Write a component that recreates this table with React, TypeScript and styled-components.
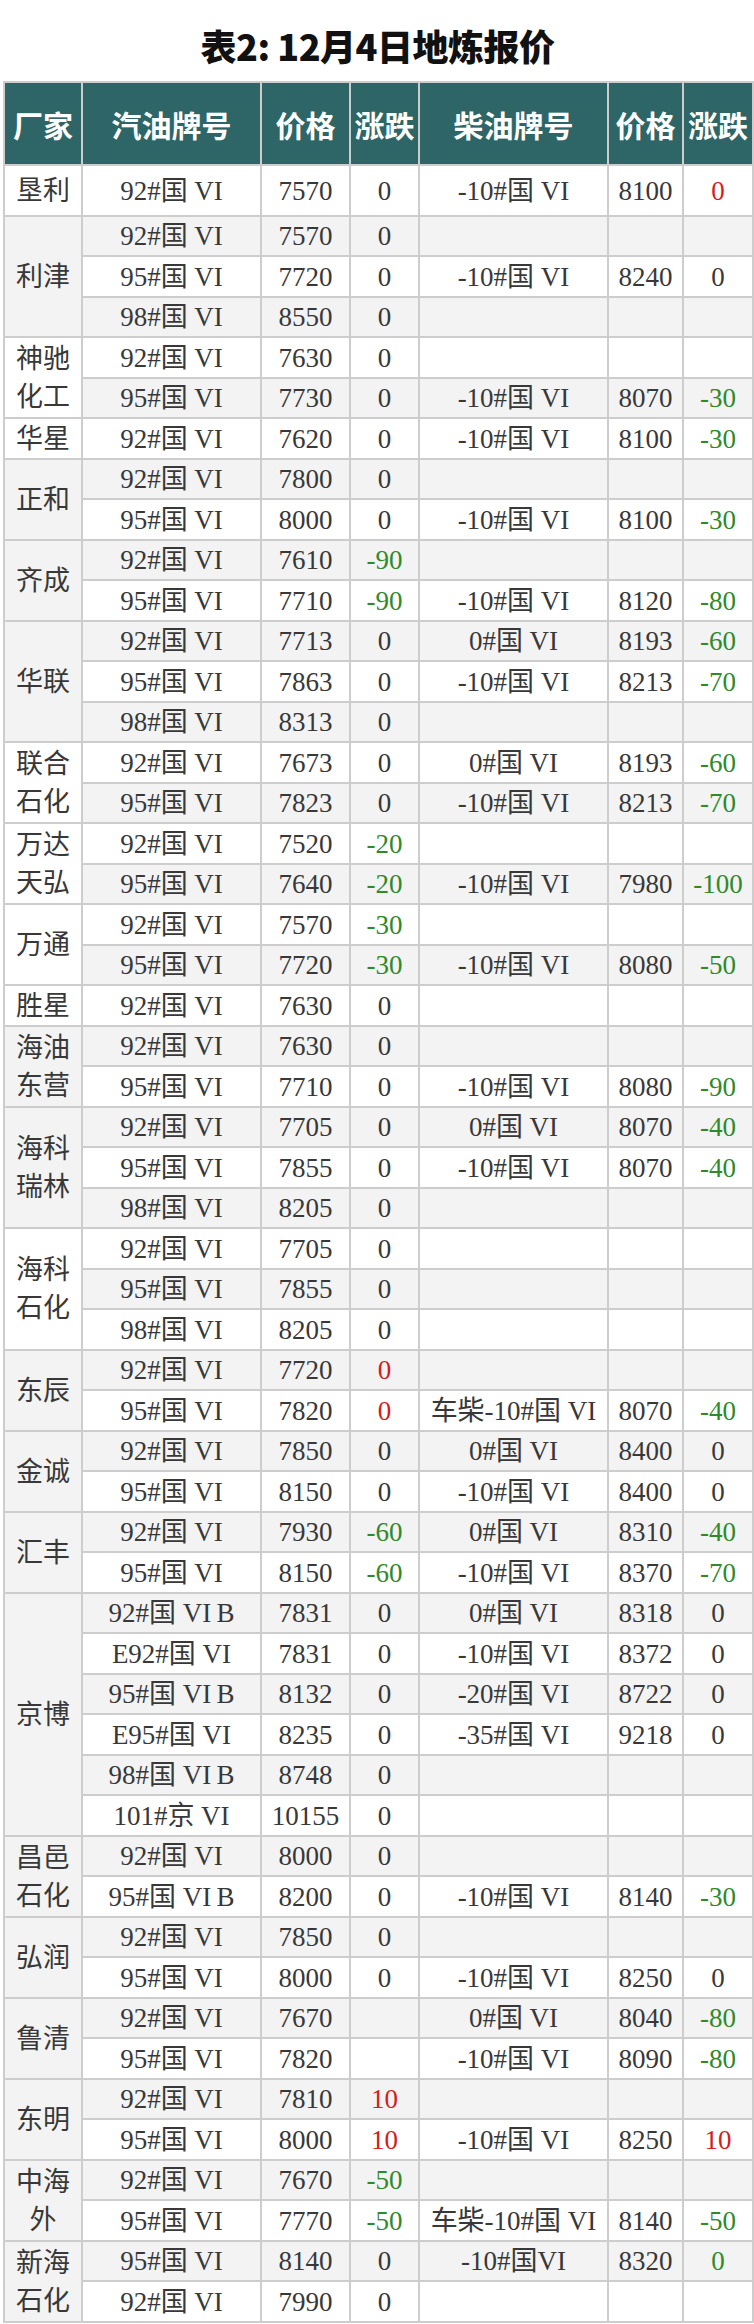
import React from 'react';
import styled, { createGlobalStyle } from 'styled-components';

const GlobalStyle = createGlobalStyle`
  html, body {
    margin: 0;
    padding: 0;
    background: #ffffff;
  }
`;

const Page = styled.div`
  width: 754px;
  padding: 0 2px 0 3px;
  box-sizing: border-box;
  background: #fff;
`;

const Title = styled.h1`
  margin: 0;
  height: 81px;
  padding-top: 8px;
  box-sizing: border-box;
  display: flex;
  align-items: center;
  justify-content: center;
  font-family: 'Noto Sans CJK SC', sans-serif;
  font-weight: 900;
  font-size: 36px;
  color: #111;
  letter-spacing: -0.5px;
`;

const Table = styled.table`
  width: 749px;
  table-layout: fixed;
  border-collapse: collapse;
  font-family: 'Liberation Serif', 'Noto Sans CJK SC', serif;
  font-size: 27px;
  color: #383838;
`;

const HeadRow = styled.tr`
  height: 83px;
  background: #2e6667;
`;

const Th = styled.th`
  border: 2px solid #cdcdcd;
  padding: 0;
  font-family: 'Noto Sans CJK SC', sans-serif;
  font-weight: 700;
  font-size: 30px;
  color: #ffffff;
  text-align: center;
  white-space: nowrap;
`;

const Row = styled.tr<{ $tall?: boolean }>`
  height: 40px;
  background: #ffffff;
  &:nth-child(odd) {
    height: 41px;
  }
  &:nth-child(even) {
    background: #f3f3f3;
  }
  &:first-child {
    height: ${p => (p.$tall ? 51 : 41)}px;
  }
`;

const Td = styled.td<{ $tone?: 'red' | 'green' | 'plain' }>`
  border: 2px solid #cdcdcd;
  padding: 0;
  text-align: center;
  vertical-align: middle;
  white-space: nowrap;
  line-height: 30px;
  color: ${p => (p.$tone === 'red' ? '#d41d1d' : p.$tone === 'green' ? '#2f8a2a' : '#383838')};
`;

const Maker = styled.td`
  border: 2px solid #cdcdcd;
  padding: 0 6px;
  text-align: center;
  vertical-align: middle;
  line-height: 38px;
  word-break: break-all;
`;

// gas, gas price, gas change, diesel, diesel price, diesel change
// change suffix "r" / "g" forces the colour of a zero
type Line = [string, string, string, string, string, string];
type Group = { name: string; rows: Line[] };

const VIB = 'VI\u2009B';

const groups: Group[] = [
  { name: '垦利', rows: [['92#国 VI', '7570', '0', '-10#国 VI', '8100', '0r']] },
  {
    name: '利津',
    rows: [
      ['92#国 VI', '7570', '0', '', '', ''],
      ['95#国 VI', '7720', '0', '-10#国 VI', '8240', '0'],
      ['98#国 VI', '8550', '0', '', '', ''],
    ],
  },
  {
    name: '神驰化工',
    rows: [
      ['92#国 VI', '7630', '0', '', '', ''],
      ['95#国 VI', '7730', '0', '-10#国 VI', '8070', '-30'],
    ],
  },
  { name: '华星', rows: [['92#国 VI', '7620', '0', '-10#国 VI', '8100', '-30']] },
  {
    name: '正和',
    rows: [
      ['92#国 VI', '7800', '0', '', '', ''],
      ['95#国 VI', '8000', '0', '-10#国 VI', '8100', '-30'],
    ],
  },
  {
    name: '齐成',
    rows: [
      ['92#国 VI', '7610', '-90', '', '', ''],
      ['95#国 VI', '7710', '-90', '-10#国 VI', '8120', '-80'],
    ],
  },
  {
    name: '华联',
    rows: [
      ['92#国 VI', '7713', '0', '0#国 VI', '8193', '-60'],
      ['95#国 VI', '7863', '0', '-10#国 VI', '8213', '-70'],
      ['98#国 VI', '8313', '0', '', '', ''],
    ],
  },
  {
    name: '联合石化',
    rows: [
      ['92#国 VI', '7673', '0', '0#国 VI', '8193', '-60'],
      ['95#国 VI', '7823', '0', '-10#国 VI', '8213', '-70'],
    ],
  },
  {
    name: '万达天弘',
    rows: [
      ['92#国 VI', '7520', '-20', '', '', ''],
      ['95#国 VI', '7640', '-20', '-10#国 VI', '7980', '-100'],
    ],
  },
  {
    name: '万通',
    rows: [
      ['92#国 VI', '7570', '-30', '', '', ''],
      ['95#国 VI', '7720', '-30', '-10#国 VI', '8080', '-50'],
    ],
  },
  { name: '胜星', rows: [['92#国 VI', '7630', '0', '', '', '']] },
  {
    name: '海油东营',
    rows: [
      ['92#国 VI', '7630', '0', '', '', ''],
      ['95#国 VI', '7710', '0', '-10#国 VI', '8080', '-90'],
    ],
  },
  {
    name: '海科瑞林',
    rows: [
      ['92#国 VI', '7705', '0', '0#国 VI', '8070', '-40'],
      ['95#国 VI', '7855', '0', '-10#国 VI', '8070', '-40'],
      ['98#国 VI', '8205', '0', '', '', ''],
    ],
  },
  {
    name: '海科石化',
    rows: [
      ['92#国 VI', '7705', '0', '', '', ''],
      ['95#国 VI', '7855', '0', '', '', ''],
      ['98#国 VI', '8205', '0', '', '', ''],
    ],
  },
  {
    name: '东辰',
    rows: [
      ['92#国 VI', '7720', '0r', '', '', ''],
      ['95#国 VI', '7820', '0r', '车柴-10#国 VI', '8070', '-40'],
    ],
  },
  {
    name: '金诚',
    rows: [
      ['92#国 VI', '7850', '0', '0#国 VI', '8400', '0'],
      ['95#国 VI', '8150', '0', '-10#国 VI', '8400', '0'],
    ],
  },
  {
    name: '汇丰',
    rows: [
      ['92#国 VI', '7930', '-60', '0#国 VI', '8310', '-40'],
      ['95#国 VI', '8150', '-60', '-10#国 VI', '8370', '-70'],
    ],
  },
  {
    name: '京博',
    rows: [
      [`92#国 ${VIB}`, '7831', '0', '0#国 VI', '8318', '0'],
      ['E92#国 VI', '7831', '0', '-10#国 VI', '8372', '0'],
      [`95#国 ${VIB}`, '8132', '0', '-20#国 VI', '8722', '0'],
      ['E95#国 VI', '8235', '0', '-35#国 VI', '9218', '0'],
      [`98#国 ${VIB}`, '8748', '0', '', '', ''],
      ['101#京 VI', '10155', '0', '', '', ''],
    ],
  },
  {
    name: '昌邑石化',
    rows: [
      ['92#国 VI', '8000', '0', '', '', ''],
      [`95#国 ${VIB}`, '8200', '0', '-10#国 VI', '8140', '-30'],
    ],
  },
  {
    name: '弘润',
    rows: [
      ['92#国 VI', '7850', '0', '', '', ''],
      ['95#国 VI', '8000', '0', '-10#国 VI', '8250', '0'],
    ],
  },
  {
    name: '鲁清',
    rows: [
      ['92#国 VI', '7670', '', '0#国 VI', '8040', '-80'],
      ['95#国 VI', '7820', '', '-10#国 VI', '8090', '-80'],
    ],
  },
  {
    name: '东明',
    rows: [
      ['92#国 VI', '7810', '10', '', '', ''],
      ['95#国 VI', '8000', '10', '-10#国 VI', '8250', '10'],
    ],
  },
  {
    name: '中海外',
    rows: [
      ['92#国 VI', '7670', '-50', '', '', ''],
      ['95#国 VI', '7770', '-50', '车柴-10#国 VI', '8140', '-50'],
    ],
  },
  {
    name: '新海石化',
    rows: [
      ['95#国 VI', '8140', '0', '-10#国VI', '8320', '0g'],
      ['92#国 VI', '7990', '0', '', '', ''],
    ],
  },
];

const toneOf = (v: string): 'red' | 'green' | 'plain' => {
  if (v.endsWith('r')) return 'red';
  if (v.endsWith('g')) return 'green';
  if (v.startsWith('-')) return 'green';
  if (v !== '' && v !== '0') return 'red';
  return 'plain';
};

const clean = (v: string) => v.replace(/[rg]$/, '');

const widths = [78, 179, 89, 69, 189, 75, 70];
const heads = ['厂家', '汽油牌号', '价格', '涨跌', '柴油牌号', '价格', '涨跌'];

export default function App() {
  return (
    <Page>
      <GlobalStyle />
      <Title>表2: 12月4日地炼报价</Title>
      <Table>
        <colgroup>
          {widths.map((w, i) => (
            <col key={i} style={{ width: w }} />
          ))}
        </colgroup>
        <thead>
          <HeadRow>
            {heads.map((h, i) => (
              <Th key={i}>{h}</Th>
            ))}
          </HeadRow>
        </thead>
        <tbody>
          {groups.map((g, gi) =>
            g.rows.map((r, ri) => (
              <Row key={`${gi}-${ri}`} $tall={gi === 0}>
                {ri === 0 && <Maker rowSpan={g.rows.length}>{g.name}</Maker>}
                <Td>{r[0]}</Td>
                <Td>{r[1]}</Td>
                <Td $tone={toneOf(r[2])}>{clean(r[2])}</Td>
                <Td>{r[3]}</Td>
                <Td>{r[4]}</Td>
                <Td $tone={toneOf(r[5])}>{clean(r[5])}</Td>
              </Row>
            ))
          )}
        </tbody>
      </Table>
    </Page>
  );
}
